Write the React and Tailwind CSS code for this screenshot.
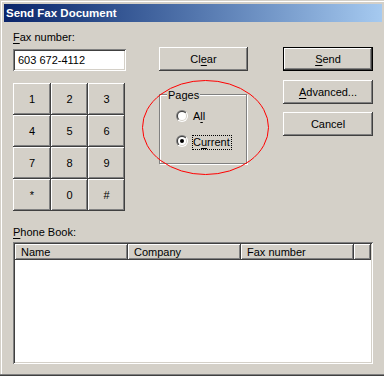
import React from "react";

const raised =
  "shadow-[inset_-1px_-1px_0_#404040,inset_1px_1px_0_#ffffff,inset_-2px_-2px_0_#808080,inset_2px_2px_0_#d4d0c8]";
const sunken =
  "shadow-[inset_1px_1px_0_#808080,inset_-1px_-1px_0_#ffffff,inset_2px_2px_0_#404040,inset_-2px_-2px_0_#d4d0c8]";
const header =
  "shadow-[inset_-1px_-1px_0_#404040,inset_1px_1px_0_#ffffff,inset_-2px_-2px_0_#808080]";

function U({ children }) {
  return <span className="underline decoration-1 underline-offset-[2px]">{children}</span>;
}

function Btn({ className = "", children }) {
  return (
    <div
      className={
        "flex items-center justify-center bg-[#d4d0c8] text-black " + raised + " " + className
      }
    >
      {children}
    </div>
  );
}

function Radio({ id, checked }) {
  return (
    <svg width="12" height="12" viewBox="0 0 12 12" className="shrink-0">
      <defs>
        <linearGradient id={id + "o"} x1="0" y1="0" x2="1" y2="1">
          <stop offset="0.5" stopColor="#808080" />
          <stop offset="0.5" stopColor="#ffffff" />
        </linearGradient>
        <linearGradient id={id + "i"} x1="0" y1="0" x2="1" y2="1">
          <stop offset="0.5" stopColor="#404040" />
          <stop offset="0.5" stopColor="#d4d0c8" />
        </linearGradient>
      </defs>
      <circle cx="6" cy="6" r="6" fill={`url(#${id}o)`} />
      <circle cx="6" cy="6" r="5" fill={`url(#${id}i)`} />
      <circle cx="6" cy="6" r="4" fill="#ffffff" />
      {checked && <circle cx="6" cy="6" r="2" fill="#000000" />}
    </svg>
  );
}

export default function App() {
  const keys = ["1", "2", "3", "4", "5", "6", "7", "8", "9", "*", "0", "#"];
  return (
    <div className="relative w-[384px] h-[376px] overflow-hidden bg-[#d4d0c8] pt-[4px] pl-[4px] font-['Liberation_Sans',Arial,sans-serif] text-[11px] leading-[13px] text-black shadow-[inset_0_-1px_0_#404040,inset_0_-2px_0_#808080,inset_1px_1px_0_#d4d0c8,inset_2px_2px_0_#ffffff]">
      {/* Title bar */}
      <div className="flex h-[18px] w-[378px] items-center bg-linear-to-r from-[#0a246a] to-[#a6caf0] pl-[2px]">
        <span className="text-[11.5px] font-bold text-white">Send Fax Document</span>
      </div>

      {/* Top section */}
      <div className="mt-[9px] flex items-start pl-[9px]">
        {/* Left column */}
        <div className="flex w-[113px] flex-col">
          <div className="h-[13px]">
            <U>F</U>ax number:
          </div>
          <div className={"mt-[5px] flex h-[22px] w-[113px] items-center bg-white pl-[5px] " + sunken}>
            603 672-4112
          </div>
          <div className="mt-[12px] grid w-[112px] grid-cols-[38px_37px_37px] grid-rows-[32px_32px_32px_32px]">
            {keys.map((k) => (
              <Btn key={k} className="h-[32px]">
                {k}
              </Btn>
            ))}
          </div>
        </div>

        {/* Middle column */}
        <div className="ml-[33px] mt-[16px] flex w-[89px] flex-col">
          <Btn className="h-[24px] w-[89px]">
            Cl<U>e</U>ar
          </Btn>
          <div className="relative mt-[23px] h-[70px] w-[88px] border border-[#808080] shadow-[inset_1px_1px_0_#ffffff,1px_1px_0_#ffffff]">
            <span className="absolute left-[7px] top-[-6px] bg-[#d4d0c8] px-[1px]">Pages</span>
            <div className="flex flex-col pl-[16px] pt-[15px]">
              <div className="flex h-[12px] items-center">
                <Radio id="ra" />
                <span className="ml-[5px]">
                  A<U>l</U>l
                </span>
              </div>
              <div className="mt-[13px] flex items-start">
                <Radio id="rc" checked />
                <span className="ml-[4px] border border-dotted border-black pr-[1px]">
                  C<U>u</U>rrent
                </span>
              </div>
            </div>
          </div>
        </div>

        {/* Right column */}
        <div className="ml-[35px] mt-[16px] flex w-[90px] flex-col">
          <div className="h-[24px] w-[90px] border border-black">
            <Btn className="h-full w-full">
              <U>S</U>end
            </Btn>
          </div>
          <Btn className="mt-[9px] h-[24px] w-[90px]">
            <U>A</U>dvanced...
          </Btn>
          <Btn className="mt-[8px] h-[24px] w-[90px]">Cancel</Btn>
        </div>
      </div>

      {/* Phone book */}
      <div className="mt-[15px] flex flex-col pl-[9px]">
        <div className="h-[13px]">
          <U>P</U>hone Book:
        </div>
        <div className={"mt-[3px] h-[122px] w-[360px] bg-white p-[2px] " + sunken}>
          <div className="flex h-[16px]">
            <div className={"flex w-[113px] items-center bg-[#d4d0c8] pl-[6px] " + header}>Name</div>
            <div className={"flex w-[113px] items-center bg-[#d4d0c8] pl-[6px] " + header}>Company</div>
            <div className={"flex w-[113px] items-center bg-[#d4d0c8] pl-[6px] " + header}>Fax number</div>
            <div className={"flex-1 bg-[#d4d0c8] " + header}></div>
          </div>
        </div>
      </div>

      {/* Red annotation ellipse */}
      <svg
        className="pointer-events-none absolute left-[142px] top-[80px]"
        width="127"
        height="95"
        viewBox="0 0 127 95"
      >
        <ellipse cx="63.5" cy="47.5" rx="63" ry="47" fill="none" stroke="#ff0000" strokeWidth="1" />
      </svg>
    </div>
  );
}
